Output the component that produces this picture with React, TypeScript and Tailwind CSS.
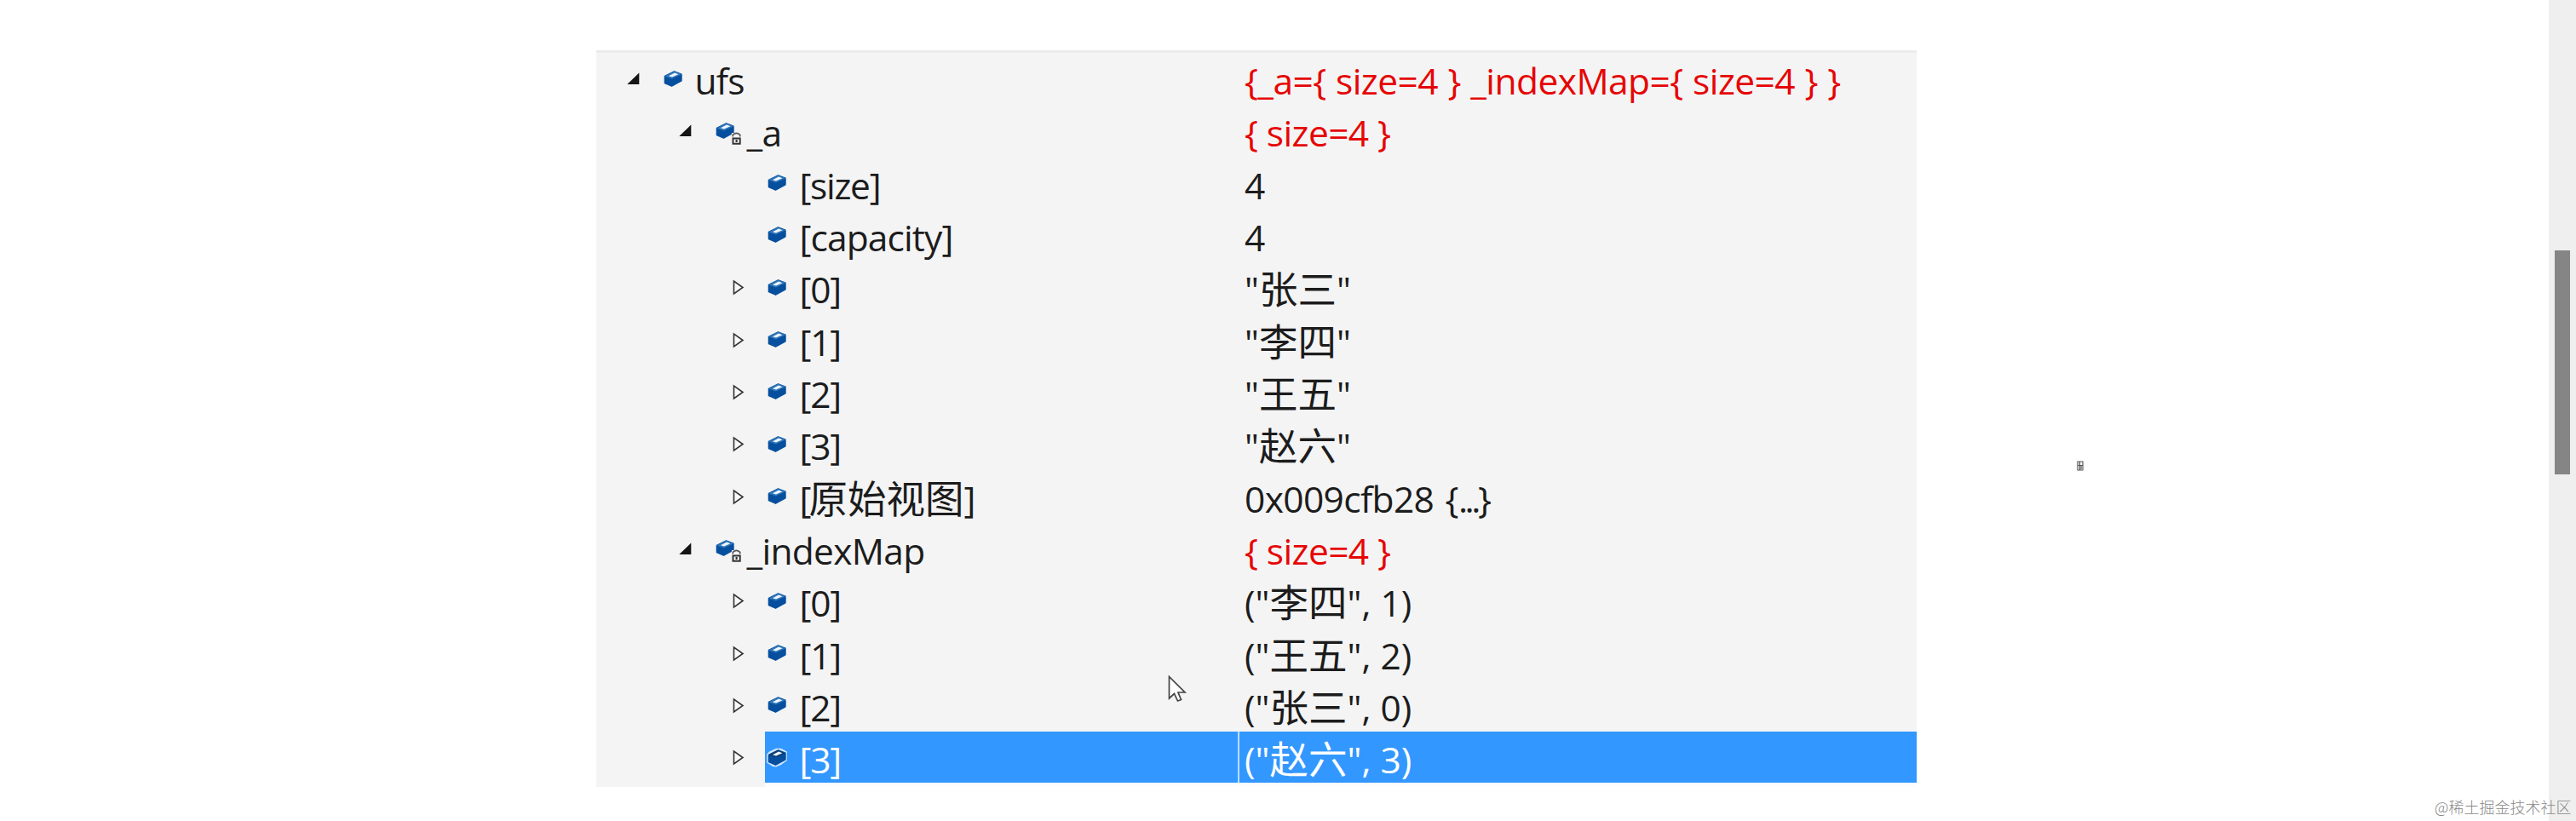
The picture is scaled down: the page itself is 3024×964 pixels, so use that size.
type Kind = "open" | "closed" | "leaf";
type Row = { level: number; kind: Kind; name: string; nameCls: string; value: string; valueCls: string; red?: boolean; lock?: boolean; selected?: boolean };

const idx = "tracking-[-1.2px]";
const rows: Row[] = [
  { level: 0, kind: "open", name: "ufs", nameCls: "tracking-[-0.8px]", value: "{_a={ size=4 } _indexMap={ size=4 } }", valueCls: "tracking-[-0.57px] [word-spacing:1px]", red: true },
  { level: 1, kind: "open", name: "_a", nameCls: "tracking-[-0.6px]", value: "{ size=4 }", valueCls: "tracking-[-0.6px]", red: true, lock: true },
  { level: 2, kind: "leaf", name: "[size]", nameCls: "tracking-[-1.3px]", value: "4", valueCls: "" },
  { level: 2, kind: "leaf", name: "[capacity]", nameCls: "tracking-[-0.9px]", value: "4", valueCls: "" },
  { level: 2, kind: "closed", name: "[0]", nameCls: idx, value: '"张三"', valueCls: "" },
  { level: 2, kind: "closed", name: "[1]", nameCls: idx, value: '"李四"', valueCls: "" },
  { level: 2, kind: "closed", name: "[2]", nameCls: idx, value: '"王五"', valueCls: "" },
  { level: 2, kind: "closed", name: "[3]", nameCls: idx, value: '"赵六"', valueCls: "" },
  { level: 2, kind: "closed", name: "[原始视图]", nameCls: "tracking-[-3px]", value: "0x009cfb28 {...}", valueCls: "tracking-[-0.65px] [word-spacing:3px]" },
  { level: 1, kind: "open", name: "_indexMap", nameCls: "tracking-[-0.7px]", value: "{ size=4 }", valueCls: "tracking-[-0.6px]", red: true, lock: true },
  { level: 2, kind: "closed", name: "[0]", nameCls: idx, value: '("李四", 1)', valueCls: "" },
  { level: 2, kind: "closed", name: "[1]", nameCls: idx, value: '("王五", 2)', valueCls: "" },
  { level: 2, kind: "closed", name: "[2]", nameCls: idx, value: '("张三", 0)', valueCls: "" },
  { level: 2, kind: "closed", name: "[3]", nameCls: idx, value: '("赵六", 3)', valueCls: "", selected: true },
];

const indents = ["w-[34px]", "w-[95px]", "w-[156px]"];
const iconWidths = ["w-[39px]", "w-[39px]", "w-[40px]"];

function Arrow({ kind }: { kind: Kind }) {
  return (
    <svg viewBox="0 0 22 22" className="h-[22px] w-[22px] shrink-0">
      {kind === "open" && <path d="M16.3 4.5V18H2.3Z" fill="#151515" />}
      {kind === "closed" && <path d="M5.5 4V19L16 11.5Z" fill="#fafafa" stroke="#333" strokeWidth="1.6" />}
    </svg>
  );
}

function Cube({ lock, selected }: { lock?: boolean; selected?: boolean }) {
  return (
    <svg viewBox="0 0 34 34" className="h-[34px] w-[34px] shrink-0">
      {selected && <path d="M1.2 12.5L4 9.5L12 5.8L18 5.8L24.8 9.5V20L18 25L12 27.5L8 27L1.2 22.5Z" fill="#cfe6ff" />}
      <path d="M3.4 13.5L14.5 8L23 11.2V18.8L11.5 25.2L3.4 21.5Z" fill="#064f9e" stroke="#064f9e" strokeWidth="1.4" strokeLinejoin="round" />
      <path d="M3.2 13.5L14.5 7.6L23.2 11.2L11.8 16.4Z" fill={selected ? "#0c3f72" : "#2f75b8"} />
      <path d="M8 13.2L15 9.6L19.5 11.2L12 14.6Z" fill="#eef6ff" />
      {lock && (
        <g>
          <path d="M21 19H33V34H20Z" fill="#f4f4f4" />
          <path d="M22.3 23.5V21.3Q26.5 17.3 30.7 21.3V23.5" fill="none" stroke="#555" strokeWidth="1.6" />
          <path d="M22.5 25.5H30.7V31.7H22.5Z" fill="#fff" stroke="#333" strokeWidth="2" />
          <path d="M25.5 27H27.7V30H25.5Z" fill="#333" />
        </g>
      )}
    </svg>
  );
}

function Label({ text, cls }: { text: string; cls: string }) {
  return (
    <span className={`whitespace-pre ${cls}`}>
      {text.split(/([\u4e00-\u9fff]+|\.{3})/).map((part, i) => {
        if (i % 2 === 0) return part;
        if (part === "...") return <span key={i} className="tracking-[-3.5px]">{part}</span>;
        return <span key={i} className="relative top-px text-[45.5px] leading-none tracking-normal">{part}</span>;
      })}
    </span>
  );
}

function TreeRow({ row }: { row: Row }) {
  const sel = row.selected;
  return (
    <div className={`flex h-[61.33px] items-start ${row.red ? "text-[#e60505]" : sel ? "text-white" : "text-[#1c1c1c]"}`}>
      <div className={`shrink-0 ${indents[row.level]}`} />
      <div className="flex h-[60px] w-[42px] shrink-0 items-center"><Arrow kind={row.kind} /></div>
      <div className={`flex h-[60px] grow ${sel ? "bg-[#3297ff] shadow-[0_5px_0_#fdfdfd]" : ""}`}>
        <div className="flex grow items-start pl-[0.5px]">
          <div className={`flex h-[61px] shrink-0 items-center ${iconWidths[row.level]}`}><Cube lock={row.lock} selected={sel} /></div>
          <div className={`h-[60px] leading-[66px] ${row.red ? "text-[#1c1c1c]" : ""}`}><Label text={row.name} cls={row.nameCls} /></div>
        </div>
        <div className={`h-[60px] w-[797px] shrink-0 border-l-2 pl-[6px] leading-[66px] ${sel ? "border-[#b9dcff]" : "border-transparent"}`}>
          <Label text={row.value} cls={row.valueCls} />
        </div>
      </div>
    </div>
  );
}

export default function App() {
  return (
    <div className="relative flex h-[964px] w-[3024px] overflow-hidden bg-white font-['Open_Sans','Noto_Sans_CJK_SC',sans-serif]">
      <div className="w-[700px] shrink-0" />
      <div className="mt-[59px] h-[865px] w-[1550px] shrink-0 border-t-[3px] border-[#ebebeb] bg-[#f4f4f4] text-[42.5px]">
        {rows.map((row, i) => <TreeRow key={i} row={row} />)}
      </div>
      <div className="grow pt-[541px] pl-[188px]">
        <svg viewBox="0 0 8 12" className="h-[12px] w-[8px]">
          <path d="M1 1H7V11H1ZM1 5.5H7M3.5 1V11" fill="#fff" stroke="#555" strokeWidth="1.2" />
          <path d="M4 6H7V11H4Z" fill="#999" />
        </svg>
      </div>
      <div className="h-full w-[32px] shrink-0 bg-[#efefef] pt-[294px] pl-[7px]">
        <div className="h-[263px] w-[18px] bg-[#858585]" />
      </div>
      <svg viewBox="0 0 24 34" className="absolute top-[792px] left-[1370px] h-[34px] w-[24px]">
        <path d="M2.5 2.5V28L8.5 22.5L12.5 31L16.5 29.5L13 21H21Z" fill="#fff" stroke="#444" strokeWidth="1.7" />
      </svg>
      <div className="absolute top-[935px] left-[2858px] font-['Noto_Sans_CJK_SC',sans-serif] text-[18px] leading-[24px] font-light whitespace-nowrap text-[#888]">@稀土掘金技术社区</div>
    </div>
  );
}
